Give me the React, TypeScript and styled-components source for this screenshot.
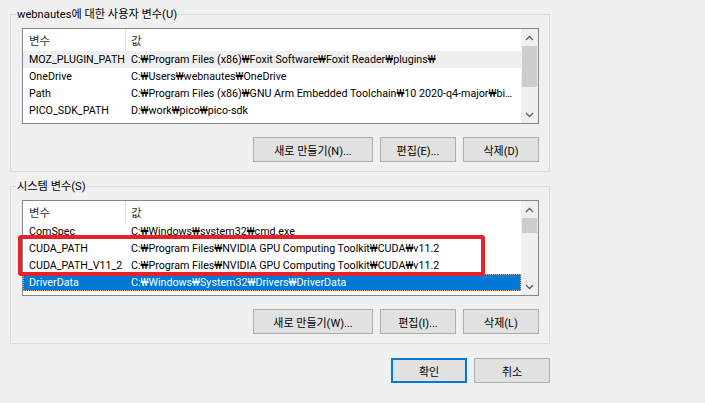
import React from "react";
import styled, { createGlobalStyle, css } from "styled-components";

const GlobalStyle = createGlobalStyle`
  html, body {
    margin: 0;
    padding: 0;
    background: #f0f0f0;
  }
  body {
    font-family: Roboto, "Noto Sans CJK KR", sans-serif;
    font-size: 11px;
    color: #000;
  }
  * { box-sizing: border-box; }
`;

const Page = styled.div`
  width: 705px;
  height: 403px;
  padding: 6px 0 0 10px;
  display: flex;
  flex-direction: column;
  overflow: hidden;
`;

const Column = styled.div`
  width: 540px;
  display: flex;
  flex-direction: column;
`;

const GroupBox = styled.fieldset<{ $gap?: number }>`
  margin: ${(p) => p.$gap ?? 0}px 0 0 0;
  border: 1px solid #dcdcdc;
  padding: 5px 10px 9px 5px;
  min-width: 0;
`;

const Legend = styled.legend`
  padding: 0 1px;
  line-height: 17px;
  font-size: 11.2px;
  color: #000;
`;

const GroupContent = styled.div`
  padding-left: 6px;
  display: flex;
  flex-direction: column;
  gap: 13px;
`;

const ListFrame = styled.div`
  position: relative;
`;

const ListView = styled.div`
  height: 96px;
  border: 1px solid #828790;
  background: #fff;
  display: flex;
  overflow: hidden;
`;

const ListBody = styled.div`
  flex: 1;
  min-width: 0;
  display: flex;
  flex-direction: column;
  overflow: hidden;
`;

const HeaderRow = styled.div`
  flex: none;
  height: 22px;
  display: flex;
  align-items: stretch;
`;

const HeaderCell = styled.div<{ $name?: boolean }>`
  display: flex;
  align-items: center;
  color: #333;
  font-size: 11.5px;
  ${(p) =>
    p.$name
      ? css`
          width: 103px;
          padding-left: 6px;
          border-right: 1px solid #e5e5e5;
        `
      : css`
          flex: 1;
          padding-left: 5px;
        `}
`;

type RowState = "normal" | "hover" | "selected";

const Row = styled.div<{ $state: RowState }>`
  flex: none;
  height: 17px;
  display: flex;
  align-items: center;
  white-space: nowrap;
  font-size: 10.7px;
  ${(p) =>
    p.$state === "hover" &&
    css`
      background: #efefef;
    `}
  ${(p) =>
    p.$state === "selected" &&
    css`
      background: #0078d7;
      color: #fff;
      outline: 1px dotted #e8a25a;
      outline-offset: -1px;
    `}
`;

const NameCell = styled.div`
  width: 103px;
  flex: none;
  padding-left: 6px;
  overflow: hidden;
  text-overflow: clip;
`;

const ValueCell = styled.div`
  flex: 1;
  min-width: 0;
  padding: 0 4px 0 5px;
  overflow: hidden;
  text-overflow: ellipsis;
`;

const ScrollBar = styled.div`
  width: 17px;
  flex: none;
  background: #f0f0f0;
  display: flex;
  flex-direction: column;
`;

const ArrowBox = styled.div`
  height: 17px;
  flex: none;
  display: flex;
  align-items: center;
  justify-content: center;
`;

const Track = styled.div`
  flex: 1;
  padding: 0 1px;
`;

const Thumb = styled.div<{ $top: number; $height: number }>`
  margin-top: ${(p) => p.$top}px;
  height: ${(p) => p.$height}px;
  background: #cdcdcd;
`;

const Highlight = styled.div`
  position: absolute;
  left: -4px;
  top: 35px;
  width: 467px;
  height: 41px;
  border: 4px solid #e8202a;
  border-radius: 3px;
  pointer-events: none;
`;

const ButtonRow = styled.div`
  display: flex;
  justify-content: flex-end;
  gap: 7px;
`;

const DialogButtons = styled(ButtonRow)`
  margin-top: 14px;
`;

const Button = styled.button<{ $width: number; $default?: boolean }>`
  width: ${(p) => p.$width}px;
  height: 25px;
  padding: 0;
  margin: 0;
  background: #e1e1e1;
  border: 1px solid #adadad;
  font-family: inherit;
  font-size: 11px;
  color: #000;
  display: flex;
  align-items: center;
  justify-content: center;
  ${(p) =>
    p.$default &&
    css`
      border: 2px solid #0078d7;
    `}
`;

const Chevron = ({ up }: { up?: boolean }) => (
  <svg width="9" height="6" viewBox="0 0 9 6">
    <path
      d={up ? "M1 5 L4.5 1.5 L8 5" : "M1 1 L4.5 4.5 L8 1"}
      fill="none"
      stroke="#606060"
      strokeWidth="1.3"
    />
  </svg>
);

type Item = { name: string; value: string; state?: RowState };

const userVars: Item[] = [
  {
    name: "MOZ_PLUGIN_PATH",
    value: "C:₩Program Files (x86)₩Foxit Software₩Foxit Reader₩plugins₩",
    state: "hover",
  },
  { name: "OneDrive", value: "C:₩Users₩webnautes₩OneDrive" },
  {
    name: "Path",
    value:
      "C:₩Program Files (x86)₩GNU Arm Embedded Toolchain₩10 2020-q4-major₩bin;C:₩Users₩webnautes₩AppData",
  },
  { name: "PICO_SDK_PATH", value: "D:₩work₩pico₩pico-sdk" },
];

const systemVars: Item[] = [
  { name: "ComSpec", value: "C:₩Windows₩system32₩cmd.exe" },
  {
    name: "CUDA_PATH",
    value: "C:₩Program Files₩NVIDIA GPU Computing Toolkit₩CUDA₩v11.2",
  },
  {
    name: "CUDA_PATH_V11_2",
    value: "C:₩Program Files₩NVIDIA GPU Computing Toolkit₩CUDA₩v11.2",
  },
  {
    name: "DriverData",
    value: "C:₩Windows₩System32₩Drivers₩DriverData",
    state: "selected",
  },
];

const VarList = ({
  items,
  thumbTop,
  thumbHeight,
  children,
}: {
  items: Item[];
  thumbTop: number;
  thumbHeight: number;
  children?: React.ReactNode;
}) => (
  <ListFrame>
    <ListView>
      <ListBody>
        <HeaderRow>
          <HeaderCell $name>변수</HeaderCell>
          <HeaderCell>값</HeaderCell>
        </HeaderRow>
        {items.map((it) => (
          <Row key={it.name} $state={it.state ?? "normal"}>
            <NameCell>{it.name}</NameCell>
            <ValueCell>{it.value}</ValueCell>
          </Row>
        ))}
      </ListBody>
      <ScrollBar>
        <ArrowBox>
          <Chevron up />
        </ArrowBox>
        <Track>
          <Thumb $top={thumbTop} $height={thumbHeight} />
        </Track>
        <ArrowBox>
          <Chevron />
        </ArrowBox>
      </ScrollBar>
    </ListView>
    {children}
  </ListFrame>
);

export default function App() {
  return (
    <>
      <GlobalStyle />
      <Page>
        <Column>
          <GroupBox>
            <Legend>webnautes에 대한 사용자 변수(U)</Legend>
            <GroupContent>
              <VarList items={userVars} thumbTop={0} thumbHeight={41} />
              <ButtonRow>
                <Button $width={120}>새로 만들기(N)...</Button>
                <Button $width={76}>편집(E)...</Button>
                <Button $width={76}>삭제(D)</Button>
              </ButtonRow>
            </GroupContent>
          </GroupBox>
          <GroupBox $gap={6}>
            <Legend>시스템 변수(S)</Legend>
            <GroupContent>
              <VarList items={systemVars} thumbTop={0} thumbHeight={15}>
                <Highlight />
              </VarList>
              <ButtonRow>
                <Button $width={120}>새로 만들기(W)...</Button>
                <Button $width={76}>편집(I)...</Button>
                <Button $width={76}>삭제(L)</Button>
              </ButtonRow>
            </GroupContent>
          </GroupBox>
          <DialogButtons>
            <Button $width={76} $default>
              확인
            </Button>
            <Button $width={76}>취소</Button>
          </DialogButtons>
        </Column>
      </Page>
    </>
  );
}
